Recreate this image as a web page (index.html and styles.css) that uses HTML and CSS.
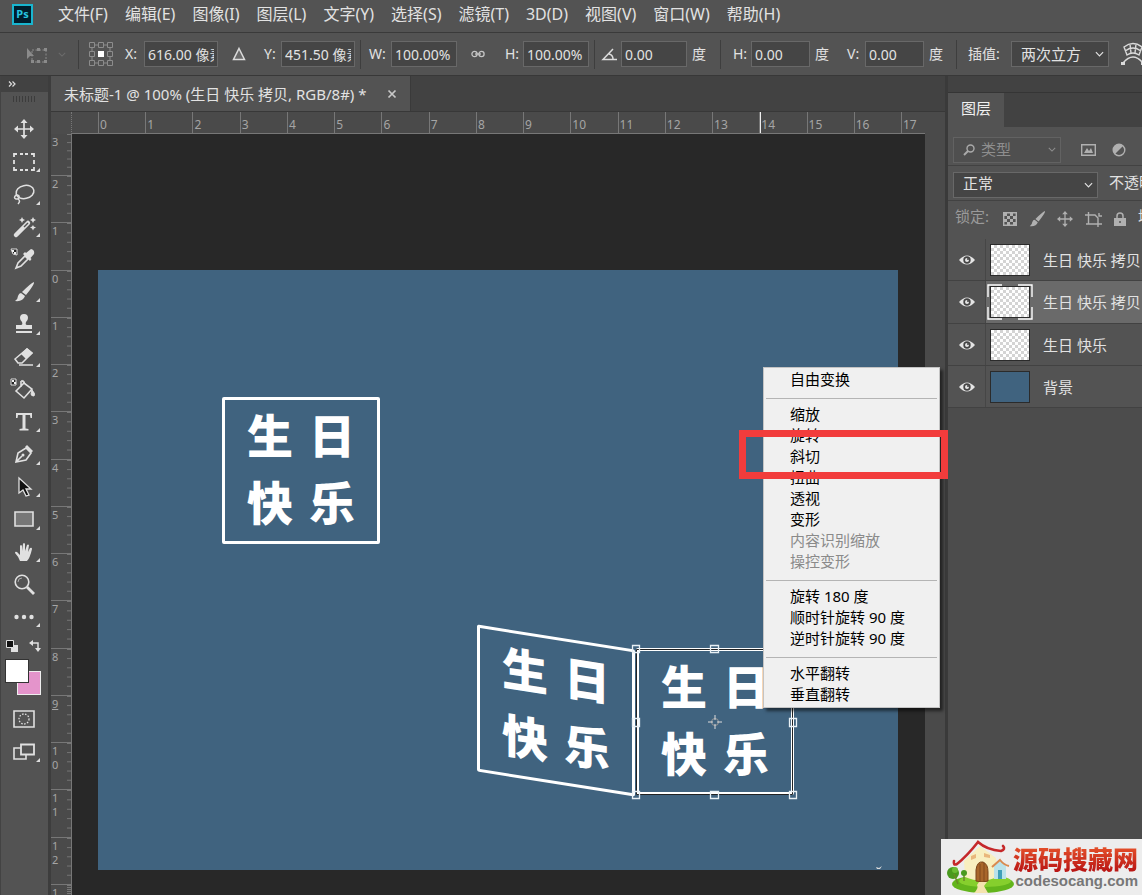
FILE: index.html
```html
<!DOCTYPE html>
<html lang="zh-CN">
<head>
<meta charset="utf-8">
<title>未标题-1</title>
<link rel="stylesheet" href="styles.css">
</head>
<body>
<svg class="defs" aria-hidden="true">
  <symbol id="chev" viewBox="0 0 10 6"><path d="M1 1l4 4 4-4" fill="none" stroke="currentColor" stroke-width="1.3"/></symbol>
  <symbol id="eye" viewBox="0 0 16 12"><path d="M0 6Q8-3 16 6 8 15 0 6z" fill="#e4e4e4"/><circle cx="8" cy="6" r="3.7" fill="#454545"/><circle cx="8" cy="6" r="2" fill="#e4e4e4"/><circle cx="9" cy="5" r="1" fill="#454545"/></symbol>
</svg>

<nav class="menubar">
  <svg class="ps" viewBox="0 0 21 21"><rect x="1" y="1" width="19" height="19" fill="#001d2c" stroke="#19b5cf" stroke-width="2"/><text x="10.500" y="14" text-anchor="middle" class="ps-text">Ps</text></svg>
  <button>文件(F)</button><button>编辑(E)</button><button>图像(I)</button><button>图层(L)</button><button>文字(Y)</button><button>选择(S)</button><button>滤镜(T)</button><button>3D(D)</button><button>视图(V)</button><button>窗口(W)</button><button>帮助(H)</button>
</nav>

<form class="options">
  <svg class="o-icon" viewBox="0 0 22 18" width="22" height="18"><path d="M1 1v11l3-3h4z" fill="#8b8b8b"/><path d="M6 3h14v12H6z" fill="none" stroke="#8b8b8b" stroke-dasharray="2 1.500"/><path d="M5 13h3v3H5zM18 13h3v3h-3zM18 1h3v3h-3zM11 1h3v3h-3zM11 13h3v3h-3z" fill="#8b8b8b"/></svg>
  <svg class="dim" width="8" height="5"><use href="#chev"/></svg>
  <span class="sep-l ref"><svg viewBox="0 0 24 24" width="24" height="24" fill="none" stroke="#8c8c8c"><path d="M.5.5h5v5h-5zM9.500.5h5v5h-5zM18.500.5h5v5h-5zM.5 9.500h5v5h-5zM18.500 9.500h5v5h-5zM.5 18.500h5v5h-5zM9.500 18.500h5v5h-5zM18.500 18.500h5v5h-5z"/><path d="M6 3h3M15 3h3M6 21h3M15 21h3M3 6v3M3 15v3M21 6v3M21 15v3"/><path d="M9 9h6v6H9z" fill="#fff" stroke="none"/></svg></span>
  <label for="px">X:</label><input id="px" value="616.00 像素">
  <svg class="mid" viewBox="0 0 14 14" width="14" height="14"><path d="M7 1.500l5.500 11h-11z" fill="#6a6a6a" stroke="#dcdcdc" stroke-width="1.500"/></svg>
  <label for="py">Y:</label><input id="py" value="451.50 像素">
  <label for="pw" class="sep-l wl">W:</label><input id="pw" value="100.00%">
  <svg class="mid" viewBox="0 0 14 8" width="14" height="8" fill="none" stroke="#c4c4c4" stroke-width="1.300"><circle cx="3.500" cy="4" r="2.600"/><circle cx="10.500" cy="4" r="2.600"/><path d="M4 4h6"/></svg>
  <label for="ph">H:</label><input id="ph" value="100.00%">
  <label for="pa" class="sep-l angle" aria-label="角度"><svg viewBox="0 0 17 13" width="17" height="13" fill="none" stroke="#dcdcdc" stroke-width="1.500"><path d="M12 1L2 11.500h14M8 6q4 1 4 5"/></svg></label><input id="pa" value="0.00"><span class="unit">度</span>
  <label for="sh" class="sep-l sk">H:</label><input id="sh" value="0.00"><span class="unit">度</span>
  <label for="sv">V:</label><input id="sv" value="0.00"><span class="unit tight">度</span>
  <label for="interp" class="sep-l cz">插值:</label>
  <span class="drop"><select id="interp"><option>两次立方</option></select><svg width="9" height="6"><use href="#chev"/></svg></span>
  <svg class="warp" viewBox="0 0 24 24" width="24" height="24" fill="none" stroke="#dadada" stroke-width="1.400"><path d="M3 5q9-7 18 0l-3 8q-6-4-12 0zM4 9q8-6 16 0M9 2l1 9M15 2l-1 9M2 21q10-12 20 0"/><path d="M0 20h4v3H0zM20 20h4v3h-4z" fill="#dadada" stroke="none"/></svg>
</form>

<main class="shell">
  <aside class="tools">
    <div class="tools-head"><svg width="8" height="6" viewBox="0 0 8 6"><path d="M1 .5L3.500 3 1 5.500M4.500.5L7 3 4.500 5.500" fill="none" stroke="#ddd" stroke-width="1.200"/></svg></div>
    <div class="grip"></div>
    <div class="tool-list">
      <button aria-label="移动"><svg viewBox="0 0 20 20"><path d="M10 2v16M2 10h16" stroke="#e0e0e0" stroke-width="1.700"/><path d="M10 0l3.500 4h-7zM10 20l3.500-4h-7zM0 10l4-3.500v7zM20 10l-4-3.500v7z" fill="#e0e0e0"/></svg></button>
      <button class="more" aria-label="选框"><svg viewBox="0 0 20 20"><path d="M0 5V2h3M17 2h3v3M20 15v3h-3M3 18H0v-3M6 2h3M11 2h3M6 18h3M11 18h3M0 8v4M20 8v4" fill="none" stroke="#e0e0e0" stroke-width="1.800"/></svg></button>
      <button class="more" aria-label="套索"><svg viewBox="0 0 20 20" fill="none" stroke="#e0e0e0" stroke-width="1.500"><ellipse cx="11" cy="8" rx="9" ry="6.500" transform="rotate(-12 11 8)"/><path d="M2 11q-3 3 0 4 4 0 3-3-2-2-4 0M4 15q3 2 0 5"/></svg></button>
      <button class="more" aria-label="魔棒"><svg viewBox="0 0 20 20"><path d="M2 18L14 6" stroke="#e0e0e0" stroke-width="4.500" stroke-linecap="round"/><path d="M10 10l4-4" stroke="#535353" stroke-width="1.500"/><path d="M8 0l1 2 2 1-2 1-1 2-1-2-2-1 2-1zM19 0l1 2 2 1-2 1-1 2-1-2-2-1 2-1zM19 8l.8 1.600L22 10.500l-2 1-1 2-1-2-2-1 2-.9z" fill="#e0e0e0"/></svg></button>
      <button aria-label="吸管"><svg viewBox="0 0 20 20"><path d="M2 19l2-5 7-7 3 3-7 7z" fill="none" stroke="#e0e0e0" stroke-width="1.600"/><path d="M9 5l7 7 1.500-2-1-1L20 5q1-4-3-5l-5 4-1-1z" fill="#e0e0e0"/><path d="M-3 0h6v6l-4-1z" fill="#222" stroke="#e0e0e0"/><path d="M-2 1h2v2h-2zM0 3h2v2H0z" fill="#eee"/></svg></button>
      <button class="more" aria-label="画笔"><svg viewBox="0 0 20 20"><path d="M20 0q1 2-8 13l-4-3Q17 1 20 0zM7 11l4 3q-2 6-10 5 3-2 3-5 1-3 3-3z" fill="#e0e0e0"/></svg></button>
      <button class="more" aria-label="图章"><svg viewBox="0 0 20 20"><path d="M6 4a4 4 0 118 0q0 2-2 4-1 3 1 3h5v4H2v-4h5q2 0 1-3-2-2-2-4zM2 17h16v2H2z" fill="#e0e0e0"/></svg></button>
      <button class="more" aria-label="橡皮擦"><svg viewBox="0 0 20 20"><path d="M1 12L13 2l5 4L8 16H4z" fill="none" stroke="#e0e0e0" stroke-width="1.500"/><path d="M7 7l5 5 7-6-6-5z" fill="#e0e0e0"/><path d="M5 18h14" stroke="#e0e0e0" stroke-width="1.500"/></svg></button>
      <button aria-label="油漆桶"><svg viewBox="0 0 20 20"><path d="M2 12l8-8 8 6-8 9zM7 2v6" fill="none" stroke="#e0e0e0" stroke-width="1.600"/><path d="M7 2q3-2 4 3M18 11q4 4 2 6-3 0-3-2z" fill="#e0e0e0" stroke="#e0e0e0"/><path d="M-3 0h5v6h-5z" fill="#222" stroke="#e0e0e0"/><path d="M-2 1h2v2h-2zM0 3h2v2H0z" fill="#eee"/></svg></button>
      <button class="more" aria-label="文字"><svg viewBox="0 0 20 20"><path d="M2 1h16v5h-1.500L16 3h-4.500v13.500l3 .5v1.500h-9V17l3-.5V3H4l-.5 3H2z" fill="#e0e0e0"/></svg></button>
      <button class="more" aria-label="钢笔"><svg viewBox="0 0 20 20"><path d="M2 18l2-9 8-5 5 5-5 7-10 2zM2 18l6-6" fill="none" stroke="#e0e0e0" stroke-width="1.600"/><path d="M13 1l6 6-2 2-6-6z" fill="#e0e0e0"/><circle cx="9" cy="11" r="1.500" fill="#e0e0e0"/></svg></button>
      <button class="more" aria-label="路径选择"><svg viewBox="0 0 20 20"><path d="M5 1v15l4-3 3 6 3-1-3-6h5z" fill="#111" stroke="#e0e0e0" stroke-width="1.300"/></svg></button>
      <button class="more" aria-label="矩形"><svg viewBox="0 0 20 20"><path d="M1 3h18v14H1z" fill="#777" stroke="#e0e0e0" stroke-width="1.600"/></svg></button>
      <button class="more" aria-label="抓手"><svg viewBox="0 0 20 20"><path d="M6 19Q4 14 1 11q0-2 2-1l3 3V4q1-2 2 0v5l1-7q1-2 2 0v7l2-6q1-1 2 0l-1 7 2-4q2-1 2 1-2 9-5 12z" fill="#e0e0e0"/></svg></button>
      <button aria-label="缩放"><svg viewBox="0 0 20 20"><circle cx="8" cy="8" r="6.800" fill="none" stroke="#e0e0e0" stroke-width="1.600"/><path d="M13 13l7 7" stroke="#e0e0e0" stroke-width="2.800"/><path d="M4 8q0-4 4-4" fill="none" stroke="#aaa"/></svg></button>
      <button class="more" aria-label="编辑工具栏"><svg viewBox="0 0 20 20" fill="#e0e0e0"><circle cx="2.500" cy="10" r="2.200"/><circle cx="10" cy="10" r="2.200"/><circle cx="17.500" cy="10" r="2.200"/></svg></button>
    </div>
    <div class="mini">
      <svg viewBox="0 0 12 12" width="12" height="12"><path d="M5 5h7v7H5z" fill="#e0e0e0"/><path d="M.5.5h7v7h-7z" fill="#111" stroke="#e0e0e0"/></svg>
      <svg viewBox="0 0 12 12" width="12" height="12"><path d="M3 3h6v6" fill="none" stroke="#e0e0e0" stroke-width="1.500"/><path d="M0 3l4-3v6zM9 12L6 8h6z" fill="#e0e0e0"/></svg>
    </div>
    <div class="swatches"><button class="bg" aria-label="背景色"></button><button class="fg" aria-label="前景色"></button></div>
    <div class="modes">
      <button aria-label="快速蒙版"><svg viewBox="0 0 22 18" width="22" height="18" fill="none" stroke="#e0e0e0"><path d="M1 1h20v16H1z" stroke-width="1.600"/><circle cx="11" cy="9" r="5" stroke-dasharray="1.500 1.500" stroke-width="1.300"/></svg></button>
      <button class="more" aria-label="屏幕模式"><svg viewBox="0 0 22 18" width="22" height="18"><path d="M1 5h12v11H1z" fill="none" stroke="#e0e0e0" stroke-width="1.600"/><path d="M8 1.500h13v10H8z" fill="#535353" stroke="#e0e0e0" stroke-width="1.800"/></svg></button>
    </div>
  </aside>

  <section class="doc">
    <div class="tabs"><div class="tab"><span>未标题-1 @ 100% (生日 快乐 拷贝, RGB/8#) *</span><button aria-label="关闭"><svg viewBox="0 0 8 8" width="8" height="8"><path d="M.5.5l7 7M7.500.5l-7 7" stroke="#c8c8c8" stroke-width="1.700"/></svg></button></div></div>
    <div class="view">
      <div class="corner"></div>
      <div class="hruler"><i></i><b>0</b><b>1</b><b>2</b><b>3</b><b>4</b><b>5</b><b>6</b><b>7</b><b>8</b><b>9</b><b>10</b><b>11</b><b>12</b><b>13</b><b class="now">14</b><b>15</b><b>16</b><b>17</b></div>
      <div class="track"></div>
      <div class="vruler"><b>3</b><b>2</b><b>1</b><b>0</b><b>1</b><b>2</b><b>3</b><b>4</b><b>5</b><b>6</b><b>7</b><b>8</b><b class="now">9</b><b>1<br>0</b><b>1<br>1</b><b>1<br>2</b><b>1</b></div>
      <div class="stage">
        <div class="art">
          <div class="card one"><span>生</span><span>日</span><span>快</span><span>乐</span></div>
          <div class="card two"><span>生</span><span>日</span><span>快</span><span>乐</span></div>
          <div class="card three"><span>生</span><span>日</span><span>快</span><span>乐</span></div>
          <svg class="handles" viewBox="0 0 166 156" width="166" height="156" fill="none">
            <path d="M5.500 5.500h156v145h-156z" stroke="#222"/>
            <g stroke="#e8f0f5" stroke-width="1.300"><path d="M1.500 1.500h7v7h-7zM79.500 1.500h8v7h-8zM158.500 1.500h7v7h-7zM1.500 74.500h7v8h-7zM158.500 74.500h7v8h-7zM1.500 147.500h7v7h-7zM79.500 147.500h8v7h-8zM158.500 147.500h7v7h-7z"/></g>
            <g stroke="#ddd"><circle cx="84" cy="78" r="3.500" stroke="#999"/><path d="M84 71v5M84 80v5M77 78h5M86 78h5"/></g>
          </svg>
          <svg class="speck" viewBox="0 0 6 3" width="6" height="3"><path d="M0 1l3 1 3-2-2 3H1z" fill="#ddd"/></svg>
        </div>
      </div>
      <div class="track"></div>
    </div>
  </section>

  <aside class="panel">
    <div class="panel-top"></div>
    <div class="panel-tabs"><button>图层</button></div>
    <div class="prow filter">
      <span class="drop kind"><svg class="mag" viewBox="0 0 12 12" width="12" height="12"><circle cx="7.500" cy="4.500" r="3.500" fill="none" stroke="#aaa" stroke-width="1.400"/><path d="M5 7l-4 4" stroke="#aaa" stroke-width="2"/></svg><select aria-label="类型"><option>类型</option></select><svg width="8" height="5"><use href="#chev"/></svg></span>
      <svg viewBox="0 0 15 12" width="15" height="12"><path d="M.7.7h13.600v10.600H.7z" fill="none" stroke="#b0b0b0" stroke-width="1.400"/><path d="M3 9l3-5 2 3 2-3 2 5z" fill="#b0b0b0"/></svg>
      <svg viewBox="0 0 14 14" width="14" height="14"><circle cx="7" cy="7" r="5.800" fill="none" stroke="#b0b0b0" stroke-width="1.400"/><path d="M11 3a5.600 5.600 0 11-8 8z" transform="rotate(180 7 7)" fill="#b0b0b0"/></svg>
    </div>
    <div class="prow blend"><span class="drop"><select aria-label="混合模式"><option>正常</option></select><svg width="9" height="6"><use href="#chev"/></svg></span><span>不透明度:</span></div>
    <div class="prow locks"><span>锁定:</span>
      <svg viewBox="0 0 14 14" width="14" height="14"><path d="M.7.7h12.600v12.600H.7z" fill="none" stroke="#b0b0b0" stroke-width="1.400"/><path d="M1 1h3v3H1zM7 1h3v3H7zM4 4h3v3H4zM10 4h3v3h-3zM1 7h3v3H1zM7 7h3v3H7zM4 10h3v3H4zM10 10h3v3h-3z" fill="#b0b0b0"/></svg>
      <svg viewBox="0 0 20 20" width="16" height="16"><path d="M20 0q1 2-8 13l-4-3Q17 1 20 0zM7 11l4 3q-2 6-10 5 3-2 3-5 1-3 3-3z" fill="#b0b0b0"/></svg>
      <svg viewBox="0 0 20 20" width="16" height="16"><path d="M10 2v16M2 10h16" stroke="#b0b0b0" stroke-width="1.600"/><path d="M10 0l3.500 4h-7zM10 20l3.500-4h-7zM0 10l4-3.500v7zM20 10l-4-3.500v7z" fill="#b0b0b0"/></svg>
      <svg viewBox="0 0 17 15" width="17" height="15" fill="none" stroke="#b0b0b0" stroke-width="1.400"><path d="M3.500 0v12M0 3h10l3 3v9M1 12h16M14 1v3h3"/></svg>
      <svg viewBox="0 0 12 14" width="12" height="14"><path d="M0 6h12v8H0z" fill="#b0b0b0"/><path d="M3 6V4a3 3 0 016 0v2" fill="none" stroke="#b0b0b0" stroke-width="1.500"/><circle cx="6" cy="10" r="1" fill="#535353"/></svg>
      <span class="fill">填充:</span>
    </div>
    <ul class="layers">
      <li><button aria-label="可见"><svg width="16" height="12"><use href="#eye"/></svg></button><div class="layer"><span class="thumb"></span>生日 快乐 拷贝 2</div></li>
      <li class="sel"><button aria-label="可见"><svg width="16" height="12"><use href="#eye"/></svg></button><div class="layer"><span class="thumb"></span>生日 快乐 拷贝<svg class="brackets" viewBox="0 0 46 36" width="46" height="36"><path d="M1 13V1h14M31 1h14v12M45 23v12H31M15 35H1V23" fill="none" stroke="#fff" stroke-width="1.400"/></svg></div></li>
      <li><button aria-label="可见"><svg width="16" height="12"><use href="#eye"/></svg></button><div class="layer"><span class="thumb"></span>生日 快乐</div></li>
      <li><button aria-label="可见"><svg width="16" height="12"><use href="#eye"/></svg></button><div class="layer"><span class="thumb solid"></span>背景</div></li>
    </ul>
  </aside>
</main>

<div class="context">
  <button>自由变换</button><hr>
  <button>缩放</button><button>旋转</button><button>斜切</button><button>扭曲</button><button>透视</button><button>变形</button><button disabled>内容识别缩放</button><button disabled>操控变形</button><hr>
  <button>旋转 180 度</button><button>顺时针旋转 90 度</button><button>逆时针旋转 90 度</button><hr>
  <button>水平翻转</button><button>垂直翻转</button>
</div>
<div class="marker"></div>

<div class="brand">
  <svg viewBox="0 0 68 54" width="68" height="54">
    <ellipse cx="38" cy="44" rx="31" ry="9" fill="#63b51c"/><ellipse cx="40" cy="41" rx="26" ry="6" fill="#86cf2d"/>
    <path d="M19 21L35 6l16 12 1 19q-15 7-32 0z" fill="#f8efc0"/>
    <path d="M31 41V30q1-9 7-8 5 2 5 10v9q-6 2-12 0z" fill="#a8662b" stroke="#7a431a"/><path d="M35 24v17M39 23v18" stroke="#7a431a" stroke-width=".8"/>
    <path d="M34 42h8l-3 4 4 7H29q5-5 3-8z" fill="#f4e3ae"/>
    <path d="M9 21q-1 5 3 3Q22 16 33 2q9 8 23 9 5-2 2-5" fill="none" stroke="#c5282a" stroke-width="2.600" stroke-linecap="round"/>
    <path d="M26 16l5-2v4l-5 2zM39 13l6 2v3l-6-1z" fill="#e9b77c"/>
    <path d="M49 26l6-5 6 5v13H49z" fill="#b9e2ea"/><path d="M53 30h4v9h-4z" fill="#3f9fb8"/><path d="M47 27l8-7q4 5 9 6" fill="none" stroke="#d98a50" stroke-width="2"/>
    <circle cx="8" cy="33" r="6" fill="#4a9a1e"/><circle cx="10" cy="30" r="3" fill="#6cbc34"/><path d="M9 34l4 10M19 34v7" stroke="#6a8a26" stroke-width="1.500"/><circle cx="19" cy="33" r="3" fill="#4a9a1e"/>
  </svg>
  <div class="brand-text"><strong>源码搜藏网</strong><span>codesocang.com</span></div>
</div>
</body>
</html>
```
FILE: styles.css
```css
* { box-sizing: border-box; }
body {
  margin: 0;
  min-height: 100vh;
  display: flex;
  flex-direction: column;
  position: relative;
  overflow: hidden;
  background: #535353;
  color: #e2e2e2;
  font: 14px/20px "Noto Sans", "Noto Sans CJK SC", sans-serif;
}
button, input, select { font: inherit; color: inherit; border: 0; margin: 0; padding: 0; background: none; border-radius: 0; }
svg { display: block; flex: none; overflow: visible; }
.defs { position: absolute; width: 0; height: 0; }

.menubar { display: flex; align-items: center; gap: 17px; height: 33px; padding: 0 12px 4px; border-bottom: 1px solid #3a3a3a; font-size: 16px; white-space: nowrap; }
.ps { width: 21px; height: 21px; margin-right: 8px; }
.ps-text { font: bold 11px "Noto Sans", sans-serif; fill: #27c5e0; }

.options {
  display: grid;
  grid-template-columns: 32px 20px 47px 19px 74px 46px 17px 74px 36px 66px 48px 18px 66px 32px 66px 33px 31px 59px 37px 18px 59px 32px 55px 98px 33px;
  align-items: center;
  height: 43px;
  padding: 0 0 0 26px;
  border-bottom: 1px solid #383838;
  overflow: hidden;
  white-space: nowrap;
}
.options input { width: 100%; height: 26px; padding: 0 3px; background: #454545; border: 1px solid #686868; }
.options .o-icon { margin-top: 4px; }
.dim { color: #6c6c6c; }
.mid { margin-left: 14px; }
.sep-l { display: flex; align-items: center; height: 29px; border-left: 1px solid #3e3e3e; }
.ref { padding-left: 10px; }
.wl, .sk { margin-left: 5px; padding-left: 8px; }
.sk { margin-left: 0; padding-left: 12px; }
.angle { margin-left: 5px; padding-left: 6px; }
.unit { padding-left: 5px; }
.cz { padding-left: 11px; }
.warp { margin-left: 12px; }
.drop { display: grid; flex: none; grid-template-columns: 1fr 9px; align-items: center; height: 26px; padding-right: 4px; background: #454545; border: 1px solid #686868; }
.drop select { grid-column: 1 / 3; grid-row: 1; appearance: none; padding-left: 9px; height: 24px; width: 100%; font-size: 15px; }
.drop > svg:last-child { grid-column: 2; grid-row: 1; pointer-events: none; }

.shell { flex: 1; display: grid; grid-template-columns: 51px minmax(0, 1fr) 197px; }
.tools { display: flex; flex-direction: column; border-left: 1px solid #434343; border-right: 3px solid #3d3d3d; }
.tools-head { height: 16px; padding: 5px 0 0 7px; background: #424242; }
.grip { height: 6px; margin: 4px 12px 11px; background: repeating-linear-gradient(90deg, #3c3c3c 0 1px, transparent 1px 3px); }
.tool-list { display: grid; grid-auto-rows: 1fr; height: 520px; }
.tool-list button, .modes button { display: grid; place-items: center; position: relative; width: 46px; }
.tool-list svg { width: 20px; height: 20px; }
.more::after { content: ""; position: absolute; right: 7px; bottom: 6px; border: 2px solid; border-color: transparent #ddd #ddd transparent; }
.mini { display: flex; justify-content: space-between; padding: 7px 7px 7px 5px; }
.swatches { position: relative; height: 36px; margin: 0 4px; }
.swatches button { position: absolute; width: 24px; height: 24px; border: 1px solid #333; background: #fff; }
.swatches .fg { left: 0; top: 0; }
.swatches .bg { left: 12px; top: 12px; background: #e494cb; border-color: #eee; }
.modes { display: grid; grid-auto-rows: 33px; padding-top: 7px; }

.doc { display: flex; flex-direction: column; }
.tabs { display: flex; height: 36px; background: #424242; border-bottom: 1px solid #383838; }
.tab { display: flex; align-items: center; gap: 21px; padding: 0 14px 0 13px; background: #535353; border-right: 1px solid #3a3a3a; font-size: 15px; white-space: nowrap; }
.view { flex: 1; display: grid; grid-template: 22px 1fr / 21px minmax(0, 1fr) 20px; }
.corner { border-right: 1px dotted #777; background: #4c4c4c; }
.hruler { display: grid; grid-template-columns: 26px repeat(17, 1fr) 24px; background: #4a4a4a; border-bottom: 1px solid #777; overflow: hidden; }
.hruler b, .vruler b { font-weight: normal; font-size: 12px; color: #a5a5a5; }
.hruler b { padding-left: 1px; line-height: 25px; border-left: 1px solid #777; background: linear-gradient(90deg, #777 1px, transparent 1px) 0 100% / 20% 4px repeat-x; }
.hruler .now { box-shadow: inset 1px 0 #eee; }
.vruler { display: grid; grid-template-rows: 41px repeat(15, 1fr) 11px; background: #4a4a4a; border-right: 1px solid #777; overflow: hidden; }
.vruler b { min-height: 0; padding: 1px 0 0 1px; font-size: 11px; line-height: 14px; border-top: 1px solid #777; background: linear-gradient(#777 1px, transparent 1px) 100% 0 / 4px 20% repeat-y; }
.vruler b:first-child { border-top: 0; }
.vruler .now { text-decoration: underline; }
.track { background: #4a4a4a; }
.stage { padding: 136px 0 25px 26px; background: #282828; overflow: hidden; }
.art { position: relative; width: 800px; height: 600px; background: #40637f; }
.card { position: absolute; display: grid; grid-template-columns: 1fr 1fr; justify-items: center; align-items: center; width: 158px; height: 147px; padding: 0 14px 8px; border: 3px solid #fff; border-radius: 2px; color: #fff; font: 900 46px/60px "Noto Sans CJK SC", sans-serif; }
.one { left: 124px; top: 127px; }
.two { left: 379px; top: 367px; transform: skewY(9deg); }
.three { left: 538px; top: 378px; }
.handles { position: absolute; left: 533px; top: 374px; }
.speck { position: absolute; right: 16px; bottom: 1px; }

.panel { display: flex; flex-direction: column; background: #4c4c4c; border-left: 3px solid #3a3a3a; overflow: hidden; white-space: nowrap; }
.panel-top { height: 17px; background: #424242; border-bottom: 1px solid #353535; }
.panel-tabs { height: 34px; background: #424242; }
.panel-tabs button { height: 34px; padding: 0 13px 4px; background: #535353; font-size: 15px; color: #f0f0f0; }
.prow { display: flex; align-items: center; background: #535353; border-bottom: 1px solid #424242; }
.filter { height: 39px; padding: 7px 5px 0; gap: 16px; }
.kind { grid-template-columns: 18px 1fr 8px; width: 108px; margin-right: 4px; padding-left: 9px; border-color: #626262; background: #4f4f4f; color: #8e8e8e; }
.kind select { grid-column: 2 / 4; padding: 0 0 2px; }
.kind > svg:last-child { grid-column: 3; }
.blend { height: 35px; padding: 3px 5px 0; gap: 11px; font-size: 15px; }
.blend .drop { width: 145px; }
.blend select { padding-bottom: 3px; }
.blend > span:last-child { padding-bottom: 6px; }
.locks { height: 38px; padding: 0 7px 6px; gap: 12px; color: #9a9a9a; border-bottom: 0; font-size: 15px; }
.locks > span { padding: 0 2px 3px 0; }
.locks svg { margin-top: 4px; }
.locks .fill { color: #ddd; }
.layers { list-style: none; margin: 0; padding: 0; background: #535353; font-size: 15px; }
.layers li { display: grid; grid-template-columns: 38px 1fr; height: 42px; border-bottom: 1px solid #424242; }
.layers .sel { height: 43px; }
.layers li > button { display: grid; place-items: center; border-right: 1px solid #464646; }
.layer { position: relative; display: flex; align-items: center; gap: 13px; padding-left: 4px; }
.sel .layer { background: #6a6a6a; }
.thumb { flex: none; width: 40px; height: 32px; border: 1px solid #2b2b2b; background: conic-gradient(#d4d4d4 25%, #fff 0 50%, #d4d4d4 0 75%, #fff 0) 0 0 / 6px 6px; }
.solid { background: #40637f; }
.brackets { position: absolute; left: 1px; top: 3px; }

.context { position: absolute; left: 763px; top: 367px; width: 177px; display: flex; flex-direction: column; padding: 2px 2px 1px; background: #f0f0f0; border: 1px solid #c4c4c4; box-shadow: 3px 3px 3px #0008; color: #000; font-size: 15px; }
.context button { height: 21px; padding: 0 0 3px 24px; line-height: 18px; text-align: left; }
.context button:disabled { color: #8a8a8a; }
.context hr { width: 100%; height: 14px; margin: 0; border: 0; background: linear-gradient(#b4b4b4, #b4b4b4) 0 7px / 100% 1px no-repeat; }
.marker { position: absolute; left: 739px; top: 430px; width: 209px; height: 49px; border: 7px solid #f23c3c; }

.brand { position: absolute; right: 0; bottom: 0; display: flex; align-items: center; width: 201px; height: 56px; padding-left: 4px; background: #ededed; }
.brand-text { display: flex; flex-direction: column; align-items: flex-end; }
.brand strong { font: 900 25px/27px "Noto Sans CJK SC", sans-serif; color: transparent; background: linear-gradient(#e8552c, #b81414); background-clip: text; }
.brand span { font: bold 15px/18px "Liberation Sans", sans-serif; color: #777; }
```
